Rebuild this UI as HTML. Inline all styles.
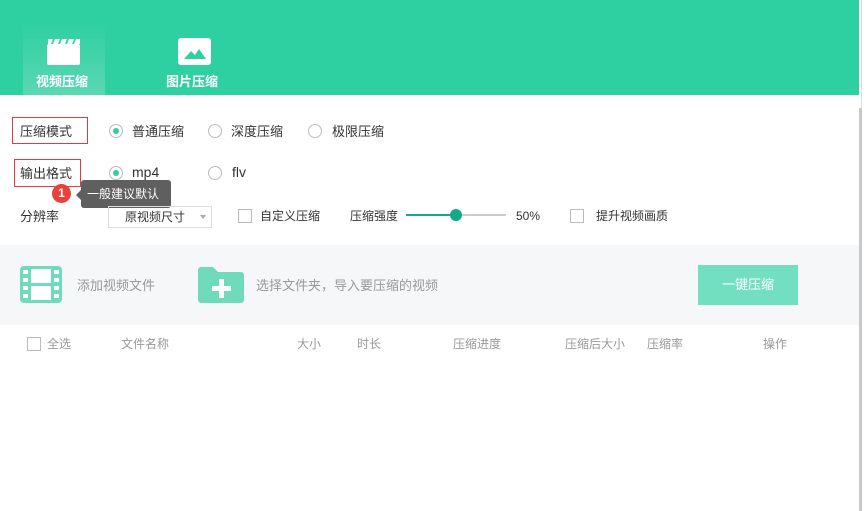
<!DOCTYPE html><html><head><meta charset="utf-8"><style>
*{margin:0;padding:0;box-sizing:border-box}
body{width:866px;height:511px;background:#fff;font-family:"Liberation Sans","Noto Sans CJK SC",sans-serif;position:relative;overflow:hidden;font-size:13px;color:#333;line-height:13px}
.a{position:absolute}
.hdr{left:0;top:0;width:859px;height:95px;background:#2ecfa0}
.tab1{left:23px;top:22px;width:82px;height:73px;background:linear-gradient(#2ecfa0,#5ad8b4)}
.tabt{color:#fff;font-weight:bold;font-size:13px}
.radio{width:14px;height:14px;border:1px solid #bbb;border-radius:50%;background:#fff}
.radio.on::after{content:"";position:absolute;left:3px;top:3px;width:6px;height:6px;border-radius:50%;background:#2ecfa0}
.box{width:14px;height:14px;border:1px solid #bbb;background:#fff}
.lbl{font-size:13px;color:#333}
.g{color:#999}
</style></head><body>
<div class="a" style="left:8px;top:0;width:22px;height:3px;background:#fff"></div>
<div class="a hdr"></div>
<div class="a" style="left:861px;top:0;width:1px;height:511px;background:#ddd"></div>
<div class="a" style="left:859px;top:108px;width:3px;height:403px;background:#c8c8c8"></div>
<div class="a tab1"></div>
<svg class="a" style="left:47px;top:38px" width="34" height="28" viewBox="0 0 34 28"><rect x="0" y="6" width="33" height="21" rx="2" fill="#fff"/><path d="M1 1h5l-2 5h-3zM8 1h5l-2 5h-5zM15 1h5l-2 5h-5zM22 1h5l-2 5h-5zM29 1h4v5h-6z" fill="#fff"/></svg>
<div class="a tabt" style="left:36px;top:75px">视频压缩</div>
<svg class="a" style="left:178px;top:38px" width="34" height="28" viewBox="0 0 34 28"><rect x="0" y="0" width="33" height="27" rx="3" fill="#fff"/><path d="M6 21l7-8 4 4 4-6 7 10z" fill="#2ecfa0"/></svg>
<div class="a tabt" style="left:166px;top:75px">图片压缩</div>

<div class="a" style="left:12px;top:117px;width:76px;height:27px;border:1px solid #d9403d"></div>
<div class="a lbl" style="left:20px;top:125px">压缩模式</div>
<div class="a radio on" style="left:109px;top:124px"></div><div class="a lbl" style="left:132px;top:125px">普通压缩</div>
<div class="a radio" style="left:208px;top:124px"></div><div class="a lbl" style="left:231px;top:125px">深度压缩</div>
<div class="a radio" style="left:308px;top:124px"></div><div class="a lbl" style="left:332px;top:125px">极限压缩</div>

<div class="a" style="left:14px;top:159px;width:67px;height:28px;border:1px solid #d9403d"></div>
<div class="a lbl" style="left:20px;top:167px">输出格式</div>
<div class="a radio on" style="left:109px;top:166px"></div><div class="a" style="left:132px;top:166px;font-size:14px">mp4</div>
<div class="a radio" style="left:208px;top:166px"></div><div class="a" style="left:232px;top:166px;font-size:14px">flv</div>

<div class="a" style="left:81px;top:180px;width:90px;height:28px;background:#5f5f5f;border-radius:3px;color:#fff;font-size:12px;line-height:28px;padding-left:6px">一般建议默认</div>
<div class="a" style="left:76px;top:190px;width:0;height:0;border-top:5px solid transparent;border-bottom:5px solid transparent;border-right:5px solid #5f5f5f"></div>
<div class="a" style="left:52px;top:184px;width:19px;height:19px;border-radius:50%;background:#e8413c;color:#fff;font-size:12px;font-weight:bold;text-align:center;line-height:19px">1</div>

<div class="a lbl" style="left:20px;top:210px">分辨率</div>
<div class="a" style="left:108px;top:206px;width:104px;height:22px;border:1px solid #ddd;font-size:12px;line-height:20px;padding-left:16px">原视频尺寸</div>
<div class="a" style="left:200px;top:215px;border-left:3px solid transparent;border-right:3px solid transparent;border-top:4px solid #aaa"></div>
<div class="a box" style="left:238px;top:209px"></div><div class="a" style="left:260px;top:210px;font-size:12px">自定义压缩</div>
<div class="a" style="left:350px;top:210px;font-size:12px">压缩强度</div>
<div class="a" style="left:406px;top:214px;width:50px;height:2px;background:#17a88a"></div>
<div class="a" style="left:456px;top:214px;width:50px;height:2px;background:#ccc"></div>
<div class="a" style="left:450px;top:209px;width:12px;height:12px;border-radius:50%;background:#17a88a"></div>
<div class="a" style="left:516px;top:210px;font-size:12px">50%</div>
<div class="a box" style="left:570px;top:209px"></div><div class="a" style="left:596px;top:210px;font-size:12px">提升视频画质</div>

<div class="a" style="left:0;top:245px;width:859px;height:80px;background:#f5f7f9"></div>
<svg class="a" style="left:20px;top:266px" width="43" height="38" viewBox="0 0 43 38"><rect x="0" y="0" width="42" height="37" rx="4" fill="#6fdbbb"/><rect x="11" y="3" width="20" height="14" fill="#fff"/><rect x="11" y="20" width="20" height="14" fill="#fff"/><g fill="#fff"><rect x="3" y="4" width="5" height="4"/><rect x="3" y="12" width="5" height="4"/><rect x="3" y="20" width="5" height="4"/><rect x="3" y="28" width="5" height="4"/><rect x="34" y="4" width="5" height="4"/><rect x="34" y="12" width="5" height="4"/><rect x="34" y="20" width="5" height="4"/><rect x="34" y="28" width="5" height="4"/></g></svg>
<div class="a" style="left:77px;top:279px;color:#999;font-size:13px">添加视频文件</div>
<svg class="a" style="left:198px;top:266px" width="46" height="38" viewBox="0 0 46 38"><path d="M0 4a3 3 0 0 1 3-3h12l5 5h23a3 3 0 0 1 3 3v25a3 3 0 0 1-3 3H3a3 3 0 0 1-3-3z" fill="#6fdbbb"/><path d="M21 13h5v7h7v5h-7v7h-5v-7h-7v-5h7z" fill="#fff"/></svg>
<div class="a" style="left:256px;top:279px;color:#999;font-size:13px">选择文件夹，导入要压缩的视频</div>
<div class="a" style="left:698px;top:265px;width:100px;height:40px;background:#72dfc0;color:#fff;font-size:13px;text-align:center;line-height:40px">一键压缩</div>

<div class="a box" style="left:27px;top:337px"></div>
<div class="a g" style="left:47px;top:338px;font-size:12px">全选</div>
<div class="a g" style="left:121px;top:338px;font-size:12px">文件名称</div>
<div class="a g" style="left:297px;top:338px;font-size:12px">大小</div>
<div class="a g" style="left:357px;top:338px;font-size:12px">时长</div>
<div class="a g" style="left:453px;top:338px;font-size:12px">压缩进度</div>
<div class="a g" style="left:565px;top:338px;font-size:12px">压缩后大小</div>
<div class="a g" style="left:647px;top:338px;font-size:12px">压缩率</div>
<div class="a g" style="left:763px;top:338px;font-size:12px">操作</div>
</body></html>
